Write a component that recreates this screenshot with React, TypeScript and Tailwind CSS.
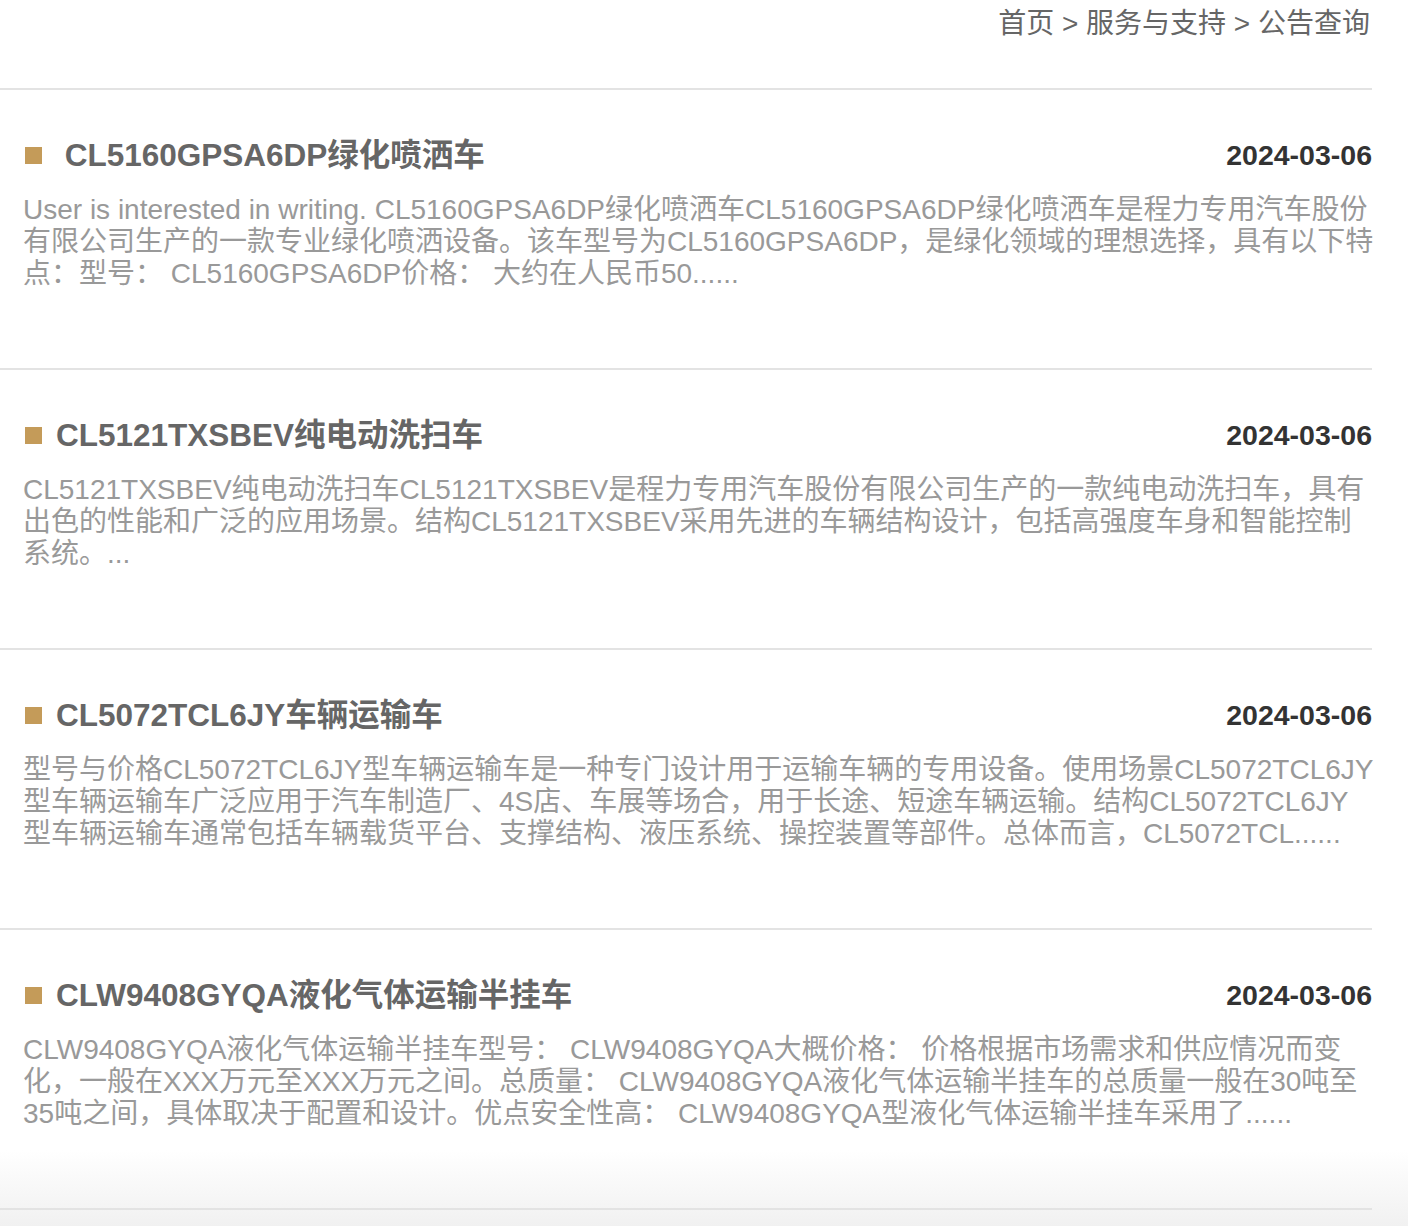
const font = { fontFamily: '"Liberation Sans", "Noto Sans CJK SC", sans-serif' }

const notices = [
  {
    title: " CL5160GPSA6DP绿化喷洒车",
    date: "2024-03-06",
    lines: [
      "User is interested in writing. CL5160GPSA6DP绿化喷洒车CL5160GPSA6DP绿化喷洒车是程力专用汽车股份",
      "有限公司生产的一款专业绿化喷洒设备。该车型号为CL5160GPSA6DP，是绿化领域的理想选择，具有以下特",
      "点：型号： CL5160GPSA6DP价格： 大约在人民币50......",
    ],
  },
  {
    title: "CL5121TXSBEV纯电动洗扫车",
    date: "2024-03-06",
    lines: [
      "CL5121TXSBEV纯电动洗扫车CL5121TXSBEV是程力专用汽车股份有限公司生产的一款纯电动洗扫车，具有",
      "出色的性能和广泛的应用场景。结构CL5121TXSBEV采用先进的车辆结构设计，包括高强度车身和智能控制",
      "系统。...",
    ],
  },
  {
    title: "CL5072TCL6JY车辆运输车",
    date: "2024-03-06",
    lines: [
      "型号与价格CL5072TCL6JY型车辆运输车是一种专门设计用于运输车辆的专用设备。使用场景CL5072TCL6JY",
      "型车辆运输车广泛应用于汽车制造厂、4S店、车展等场合，用于长途、短途车辆运输。结构CL5072TCL6JY",
      "型车辆运输车通常包括车辆载货平台、支撑结构、液压系统、操控装置等部件。总体而言，CL5072TCL......",
    ],
  },
  {
    title: "CLW9408GYQA液化气体运输半挂车",
    date: "2024-03-06",
    lines: [
      "CLW9408GYQA液化气体运输半挂车型号： CLW9408GYQA大概价格： 价格根据市场需求和供应情况而变",
      "化，一般在XXX万元至XXX万元之间。总质量： CLW9408GYQA液化气体运输半挂车的总质量一般在30吨至",
      "35吨之间，具体取决于配置和设计。优点安全性高： CLW9408GYQA型液化气体运输半挂车采用了......",
    ],
  },
]

export default function App() {
  return (
    <div
      className="min-h-[1226px] w-[1408px] bg-[linear-gradient(to_bottom,#ffffff_0,#ffffff_1150px,#f1f1f1_1226px)]"
      style={font}
    >
      <div className="w-[1372px]">
        {/* breadcrumb */}
        <div className="h-[88px] pt-[6px] pr-[2px] text-right text-[28px] leading-[36px] text-[#666]">
          首页 &gt; 服务与支持 &gt; 公告查询
        </div>

        {/* notice list */}
        <ul className="border-b-2 border-[#e3e3e3]">
          {notices.map((n) => (
            <li key={n.title} className="h-[280px] border-t-2 border-[#e3e3e3] pt-[45px]">
              <div className="flex items-center justify-between pl-[25px]">
                <div className="flex items-center">
                  <span className="mr-[14px] h-[17px] w-[17px] bg-[#c49b59]" />
                  <h3 className="whitespace-pre text-[31.5px] font-bold leading-[40px] text-[#666]">
                    {n.title}
                  </h3>
                </div>
                <span className="text-[28.5px] font-bold leading-[40px] text-[#333]">{n.date}</span>
              </div>
              <div className="mt-[19px] pl-[23px] text-[28px] leading-[32px] text-[#999]">
                {n.lines.map((l, i) => (
                  <p key={i} className="whitespace-nowrap">
                    {l}
                  </p>
                ))}
              </div>
            </li>
          ))}
        </ul>
      </div>
    </div>
  )
}
